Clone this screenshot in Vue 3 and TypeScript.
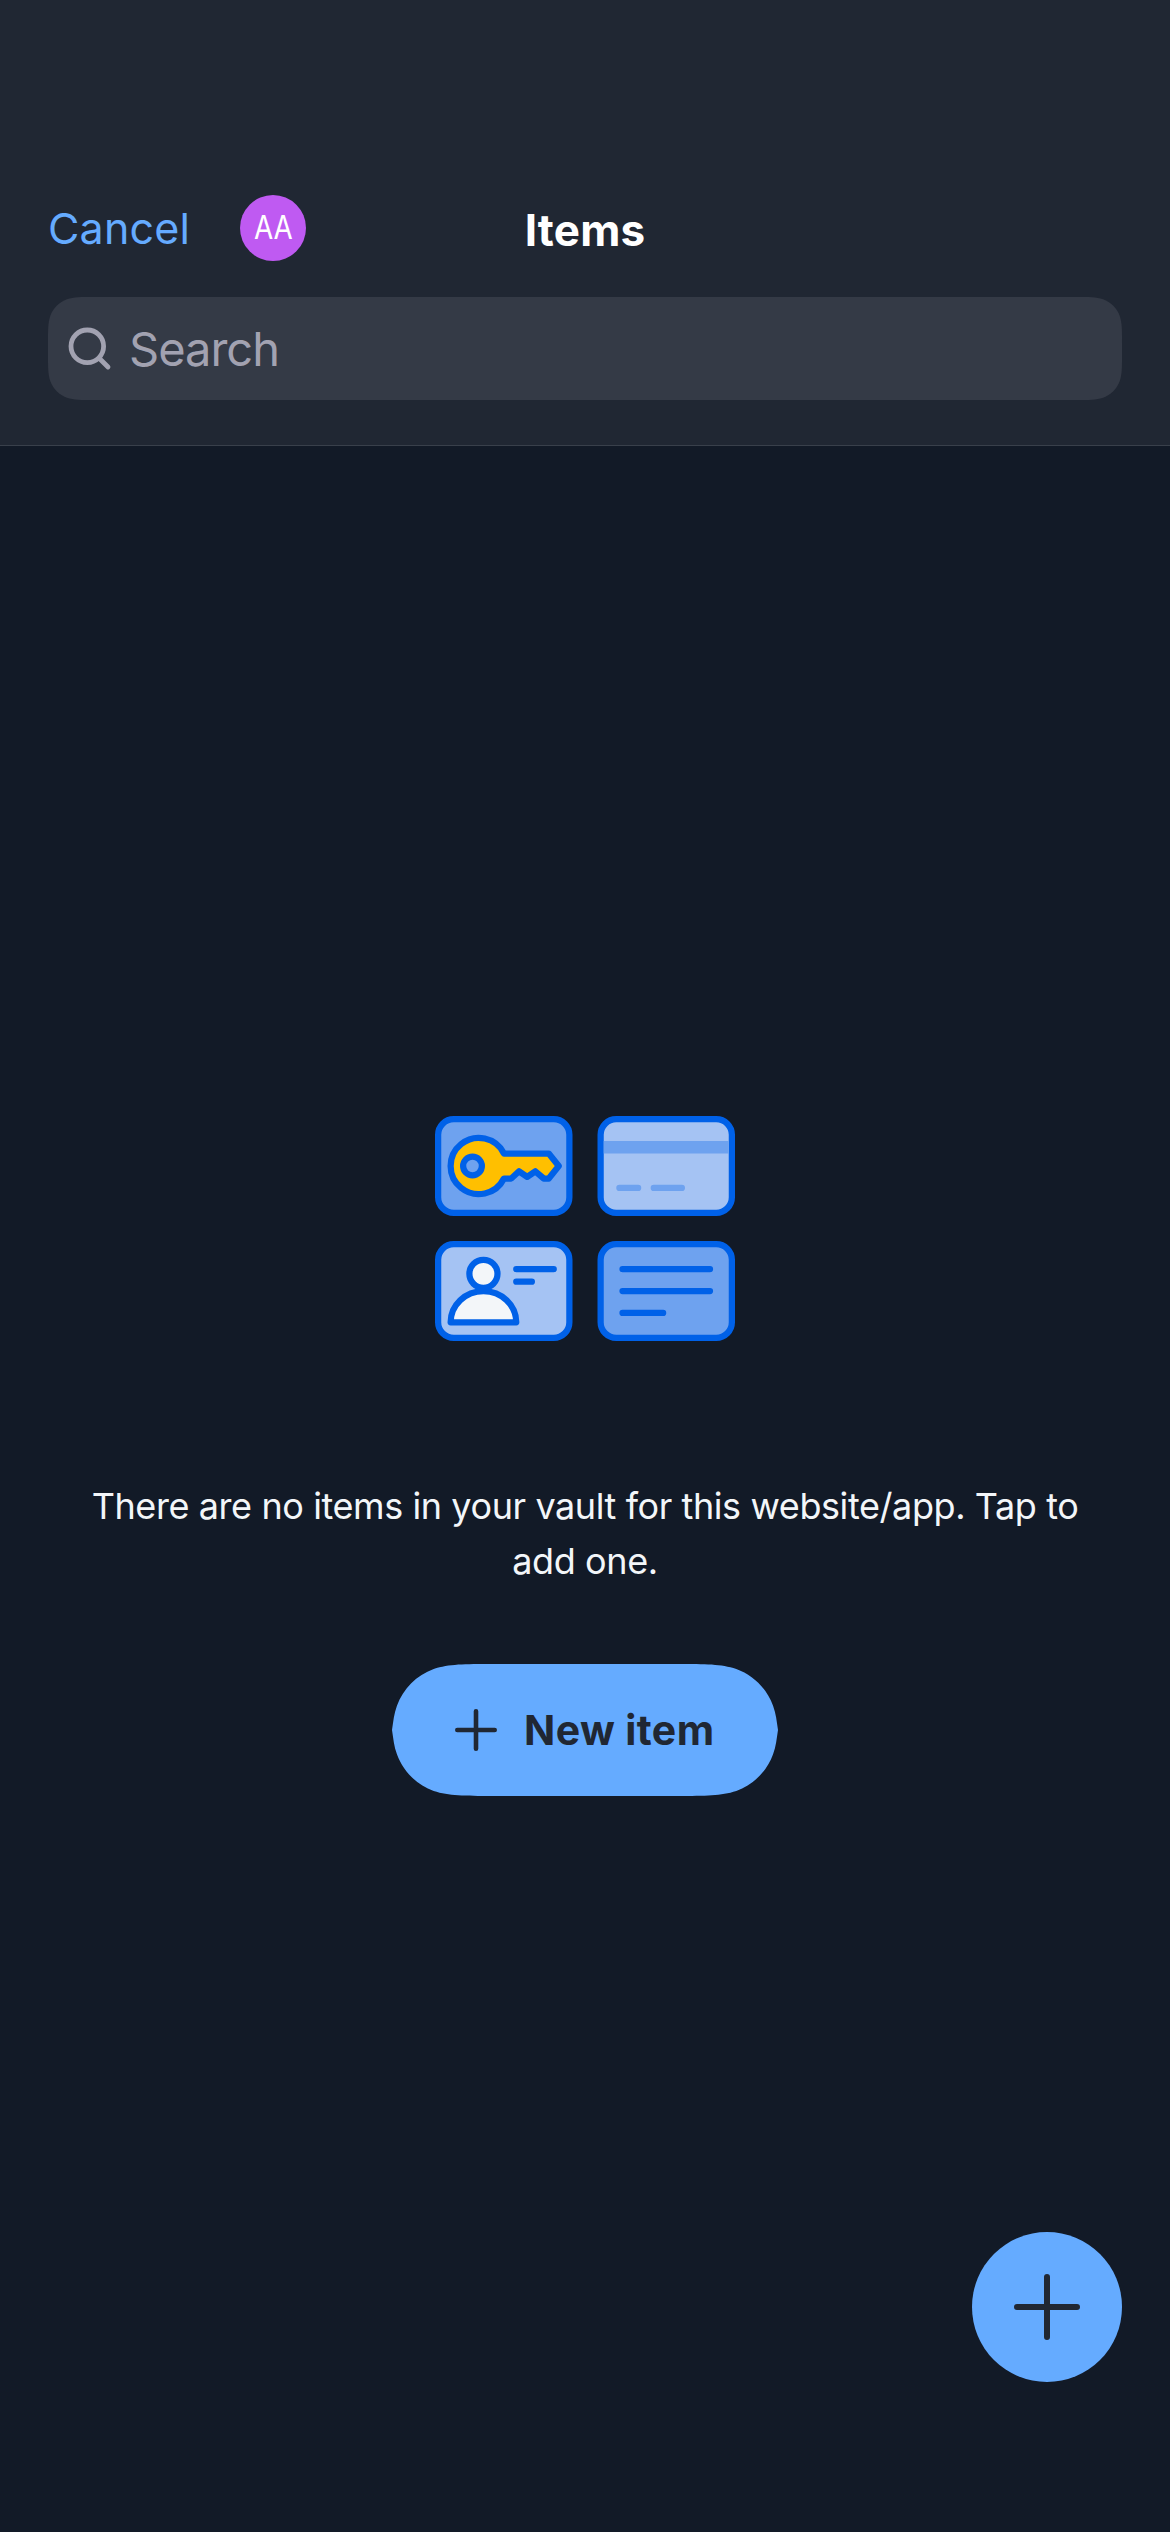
<script setup lang="ts">
interface Shape {
  width: number
  height: number
  radius: number
}

// Continuous-corner outline, squeezed vertically when the box is too short for the full curve.
function smoothOutline({ width: w, height: h, radius: r }: Shape): string {
  const end = Math.min(1.528665 * r, h / 2)
  const tight = end < 1.528665 * r
  const c1 = tight ? [0.03 * r, 0.75 * r, 0.02 * r, 0.87 * r] : [0, 0.868407 * r, 0, 1.088493 * r]
  const corner: number[][] = [
    [0, end],
    [c1[2], c1[3]],
    [c1[0], c1[1]],
    [0.0749 * r, 0.6315 * r],
    [0.16906 * r, 0.372824 * r],
    [0.372824 * r, 0.16906 * r],
    [0.6315 * r, 0.0749 * r],
    [0.8684 * r, 0],
    [1.0885 * r, 0],
    [1.528665 * r, 0],
  ]
  const trace = (pts: number[][]): string => {
    const s = pts.map(([x, y]) => `${x.toFixed(2)} ${y.toFixed(2)}`)
    return `${s[0]} C${s[1]} ${s[2]} ${s[3]} C${s[4]} ${s[5]} ${s[6]} C${s[7]} ${s[8]} ${s[9]}`
  }
  const topLeft = corner
  const topRight = corner.map(([x, y]) => [w - x, y]).reverse()
  const bottomRight = corner.map(([x, y]) => [w - x, h - y])
  const bottomLeft = corner.map(([x, y]) => [x, h - y]).reverse()
  return `path("M${trace(topLeft)} L${trace(topRight)} L${trace(bottomRight)} L${trace(bottomLeft)} Z")`
}

const searchOutline = smoothOutline({ width: 1074, height: 103, radius: 30 })
const buttonOutline = smoothOutline({ width: 386, height: 132, radius: 66 })
</script>

<template>
  <div class="screen">
    <header class="header">
      <div class="nav">
        <div class="nav-left">
          <a class="cancel">Cancel</a>
          <div class="avatar"><span class="initials">AA</span></div>
        </div>
        <h1 class="title">Items</h1>
        <div></div>
      </div>
      <div class="search" :style="{ clipPath: searchOutline }">
        <svg class="search-icon" viewBox="0 0 44 44" fill="none" stroke="currentColor" stroke-width="4.8" stroke-linecap="round">
          <circle cx="19.3" cy="19.3" r="16.3" />
          <path d="M31.2 31.2 40 40" />
        </svg>
        <span class="placeholder">Search</span>
      </div>
    </header>

    <main class="content">
      <svg class="art" viewBox="0 0 96 72" stroke-width="2" stroke-linecap="round" stroke-linejoin="round">
        <g stroke="#0061e8">
          <rect x="1" y="1" width="42" height="30" rx="5" fill="#6ea2ef" />
          <rect x="53" y="1" width="42" height="30" rx="5" fill="#a5c3f3" />
          <rect x="1" y="41" width="42" height="30" rx="5" fill="#a5c3f3" />
          <rect x="53" y="41" width="42" height="30" rx="5" fill="#6ea2ef" />
          <path
            d="M22.06 12H36.4L39.6 16 36.4 20H34.8L32.1 17.7 29.5 19.5 26.9 17.7 24.4 20H22.06A9 9 0 1 1 22.06 12Z"
            fill="#ffbf00"
          />
          <circle cx="12" cy="16" r="3" fill="#6ea2ef" />
          <circle cx="15.5" cy="50.5" r="4.5" fill="#f3f6f9" />
          <path d="M5 66A10.5 10 0 0 1 26 66Z" fill="#f3f6f9" />
          <path d="M26 49H38M26 53H31M60 49H88M60 56H88M60 63H73" />
        </g>
        <path d="M54 8H94V12H54Z" fill="#6ea2ef" />
        <path d="M59 23H65M70 23H79" stroke="#6ea2ef" />
      </svg>
      <p class="message">There are no items in your vault for this website/app. Tap to<br />add one.</p>
      <button class="new-item" type="button" :style="{ clipPath: buttonOutline }">
        <svg class="plus-small" viewBox="0 0 42 42" fill="none" stroke="currentColor" stroke-width="4.6" stroke-linecap="round">
          <path d="M21 2.3V39.7M2.3 21H39.7" />
        </svg>
        <span class="new-label">New item</span>
      </button>
    </main>

    <button class="fab" type="button" aria-label="Add">
      <svg class="plus-large" viewBox="0 0 66 66" fill="none" stroke="currentColor" stroke-width="6" stroke-linecap="round">
        <path d="M33 3V63M3 33H63" />
      </svg>
    </button>
  </div>
</template>

<style>
body {
  margin: 0;
  background: #121a27;
}
</style>

<style scoped>
.screen {
  position: relative;
  box-sizing: border-box;
  width: 1170px;
  height: 2532px;
  overflow: hidden;
  display: flex;
  flex-direction: column;
  background: #121a27;
  font-family: Inter, "Liberation Sans", sans-serif;
}

.header {
  box-sizing: border-box;
  height: 446px;
  padding: 195px 48px 0;
  background: #202733;
  border-bottom: 1px solid #39404b;
}

.nav {
  display: grid;
  grid-template-columns: 1fr auto 1fr;
  align-items: center;
  height: 66px;
}

.nav-left {
  display: flex;
  align-items: center;
}

.cancel {
  width: 192px;
  color: #65abff;
  font-size: 43px;
  line-height: 66px;
  letter-spacing: 0.2px;
  white-space: nowrap;
}

.avatar {
  display: flex;
  align-items: center;
  justify-content: center;
  width: 66px;
  height: 66px;
  border-radius: 50%;
  background: #bf5af2;
}

.initials {
  color: #fff;
  font-size: 32px;
  line-height: 66px;
  transform: scaleX(0.87);
}

.title {
  box-sizing: border-box;
  height: 66px;
  margin: 0;
  padding-top: 4px;
  color: #fff;
  font-size: 44px;
  font-weight: 700;
  line-height: 62px;
  letter-spacing: 0.2px;
}

.search {
  display: flex;
  align-items: center;
  box-sizing: border-box;
  height: 103px;
  margin-top: 36px;
  padding-left: 20px;
  background: #343a46;
  color: #a2a2b1;
}

.search-icon {
  width: 44px;
  height: 44px;
}

.placeholder {
  margin-left: 17px;
  font-size: 47px;
  line-height: 103px;
  letter-spacing: -1px;
}

.content {
  display: flex;
  flex-direction: column;
  align-items: center;
  padding-top: 670px;
}

.art {
  display: block;
  width: 300px;
  height: 225px;
}

.message {
  height: 112px;
  margin: 138px 0 0;
  color: #f3f6f9;
  font-size: 36px;
  line-height: 55px;
  letter-spacing: -0.41px;
  text-align: center;
  white-space: nowrap;
}

.new-item {
  display: flex;
  align-items: center;
  box-sizing: border-box;
  width: 386px;
  height: 132px;
  margin: 73px 0 0;
  padding: 0 0 0 63px;
  border: 0;
  background: #65abff;
  color: #202733;
  font-family: inherit;
}

.plus-small {
  flex: none;
  width: 42px;
  height: 42px;
}

.new-label {
  margin-left: 27px;
  font-size: 41px;
  font-weight: 700;
  line-height: 132px;
  letter-spacing: 0.4px;
  white-space: nowrap;
}

/* Floats over the list area in the lower right corner. */
.fab {
  position: absolute;
  right: 48px;
  bottom: 150px;
  display: flex;
  align-items: center;
  justify-content: center;
  width: 150px;
  height: 150px;
  padding: 0;
  border: 0;
  border-radius: 50%;
  background: #65abff;
  color: #202733;
}

.plus-large {
  width: 66px;
  height: 66px;
}
</style>
